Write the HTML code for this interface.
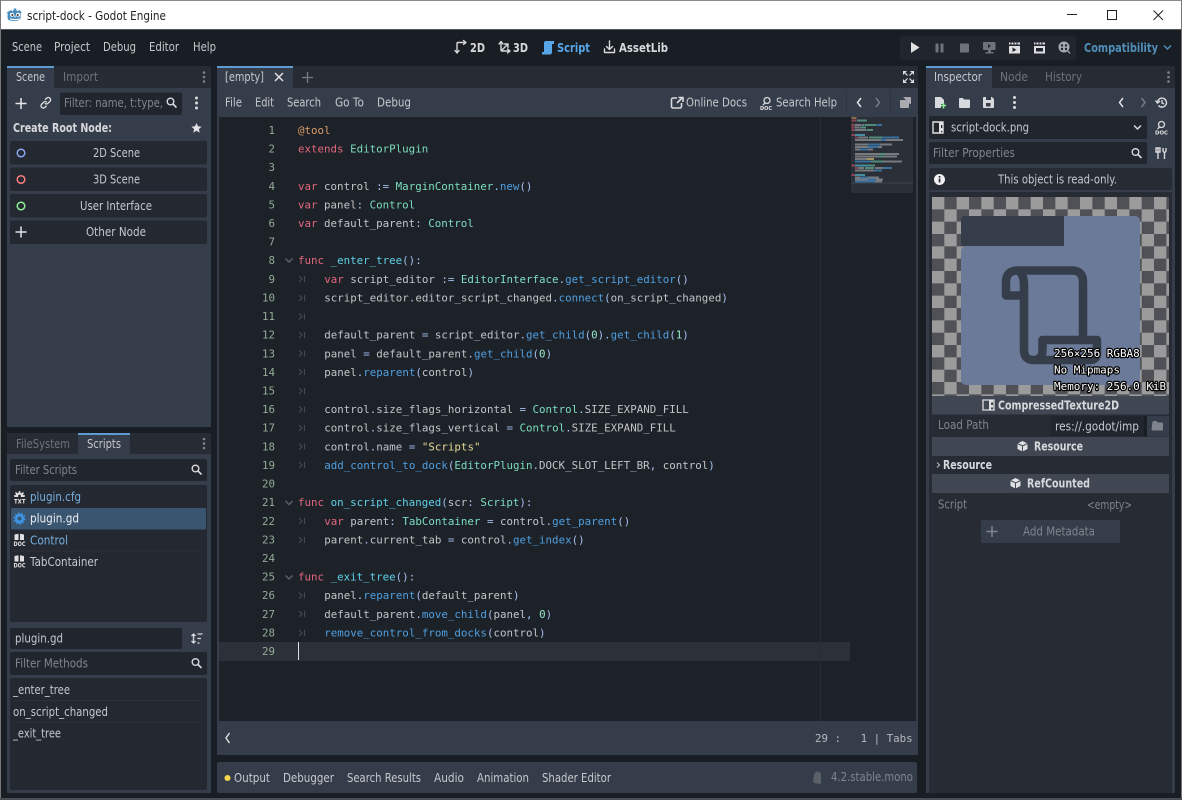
<!DOCTYPE html>
<html><head><meta charset="utf-8"><title>script-dock - Godot Engine</title>
<style>
html,body{margin:0;padding:0;background:#1a1e26;width:1182px;height:800px;overflow:hidden}
svg{display:block}
text{font-family:"DejaVu Sans",sans-serif;font-size:12px;fill:#c6c8cc;white-space:pre}
.b{font-weight:bold;fill:#d6d8db}
.d{fill:#80848c}
.dd{fill:#6e737b}
.c{font-family:"DejaVu Sans Mono","Liberation Mono",monospace;font-size:10.82px;fill:#c2c4c8}
.n{font-family:"DejaVu Sans Mono","Liberation Mono",monospace;font-size:10.82px;fill:#93ab95;text-anchor:end}
.k{fill:#e2667c}.t{fill:#7cdcc0}.f{fill:#4f9fe0}.s{fill:#a5bfee}.a{fill:#dc9c68}.h{fill:#5fd0e6}.q{fill:#e8d894}.u{fill:#95e8cc}
.ov{font-family:"DejaVu Sans Mono","Liberation Mono",monospace;font-size:10.96px;fill:#fff;stroke:#000;stroke-width:2.4px;paint-order:stroke;stroke-linejoin:round}
.i{fill:none;stroke:#d8d9dc;stroke-width:1.6;stroke-linecap:round;stroke-linejoin:round}
.mk{fill:none;stroke:#444a53;stroke-width:1.1}
.doc{font-size:5.5px;font-weight:bold;fill:#e0e0e2}
</style></head><body>
<svg width="1182" height="800" viewBox="0 0 1182 800" xmlns="http://www.w3.org/2000/svg">
<defs>
<pattern id="ck" x="932" y="197" width="24.67" height="24.67" patternUnits="userSpaceOnUse">
<rect width="24.67" height="24.67" fill="#4f5157"/>
<rect width="12.33" height="12.33" fill="#9b9b9b"/>
<rect x="12.33" y="12.33" width="12.34" height="12.34" fill="#9b9b9b"/>
</pattern>
</defs>
<!-- window -->
<rect width="1182" height="800" fill="#191d24"/>
<rect width="1182" height="30" fill="#fff"/>
<rect width="1182" height="1" fill="#8c8c8c"/>
<rect y="29" width="1182" height="1" fill="#555"/>
<rect x="0" y="0" width="1" height="800" fill="#777"/>
<rect x="1181" y="0" width="1" height="800" fill="#777"/>
<rect y="798" width="1182" height="2" fill="#4a4e55"/>
<!-- title logo -->
<path d="M9.500 11l1.500-1 1.200 1.200 1.300-.8.400-1.900h2.200l.4 1.900 1.300.8 1.200-1.200 1.500 1 1 1.500-.9.900V19c-1.500 1.500-4 2-6.500 2s-5-.5-6.500-2v-5.600l-.9-.9z" fill="#478cbf"/>
<circle cx="12" cy="14.800" r="2" fill="#fff"/><circle cx="18" cy="14.800" r="2" fill="#fff"/>
<circle cx="12.300" cy="15" r="1" fill="#333"/><circle cx="17.700" cy="15" r="1" fill="#333"/>
<rect x="14.400" y="15.500" width="1.200" height="1.800" fill="#fff"/>
<path d="M10 18.800c3 1 7 1 10 0" fill="none" stroke="#fff" stroke-width="1.200"/>
<text x="27" y="20" textLength="139" lengthAdjust="spacingAndGlyphs" style="fill:#222;font-size:12.500px">script-dock - Godot Engine</text>
<path d="M1067 14.500h10" stroke="#222" stroke-width="1"/>
<rect x="1107.500" y="10.500" width="9" height="9" fill="none" stroke="#222"/>
<path d="M1153.500 10.500l9.500 9.500M1163 10.500l-9.500 9.500" stroke="#222" stroke-width="1"/>
<!-- menu -->
<text x="12" y="51" textLength="30" lengthAdjust="spacingAndGlyphs">Scene</text>
<text x="54" y="51" textLength="36" lengthAdjust="spacingAndGlyphs">Project</text>
<text x="103" y="51" textLength="33" lengthAdjust="spacingAndGlyphs">Debug</text>
<text x="149" y="51" textLength="30" lengthAdjust="spacingAndGlyphs">Editor</text>
<text x="193" y="51" textLength="23" lengthAdjust="spacingAndGlyphs">Help</text>
<!-- main switcher -->
<path class="i" d="M457 53v-9.500a1 1 0 0 1 1-1h7M455 50.500l2 2.500 2-2.500M463.500 40.500l2.500 2-2.500 2" style="stroke-width:1.400"/>
<text x="470" y="52" textLength="15" lengthAdjust="spacingAndGlyphs" class="b">2D</text>
<path class="i" d="M501 42v8a1 1 0 0 0 1 1h7.500M499 44l2-2.500 2 2.500M507.500 49l2.500 2-2.500 2M501.500 50.500l6-6M504.500 44h3.500v3.500" style="stroke-width:1.400"/>
<text x="513" y="52" textLength="15" lengthAdjust="spacingAndGlyphs" class="b">3D</text>
<path d="M545 41h9v3h-2v8c0 1.500-1 2.500-2 2.500h-8v-2.500h2v-9c0-1 .5-1.500 1-1.500z" fill="#57a6e8"/>
<text x="557" y="52" textLength="33" lengthAdjust="spacingAndGlyphs" class="b" style="fill:#57a6e8">Script</text>
<path class="i" d="M609.500 41v8M606.500 46.500l3 3 3-3M604.500 49v3.500h10V49" style="stroke-width:1.400"/>
<text x="619" y="52" textLength="49" lengthAdjust="spacingAndGlyphs" class="b">AssetLib</text>
<!-- play bar -->
<rect x="900" y="36" width="176" height="24" rx="2" fill="#21262e"/>
<path d="M911 42v11l8.500-5.500z" fill="#e0e0e0"/>
<rect x="935.500" y="43.500" width="3" height="9" fill="#6f7379"/><rect x="940.500" y="43.500" width="3" height="9" fill="#6f7379"/>
<rect x="960" y="43.500" width="9" height="9" rx="1" fill="#6f7379"/>
<path d="M984 42h10.500a1 1 0 0 1 1 1v6a1 1 0 0 1-1 1h-3.500v2h2.500v1.500h-8V52h2.500v-2h-4a1 1 0 0 1-1-1v-6a1 1 0 0 1 1-1z" fill="#6f7379"/>
<path d="M988 44v4l3-2z" fill="#21262e"/>
<path d="M1009 46h11v7.500h-11z" fill="#e0e0e2"/><path d="M1009 42.500h11v2h-11z" fill="#e0e0e2"/><path d="M1011 42v3M1014 42v3M1017 42v3" stroke="#21262e" stroke-width="1"/><path d="M1012.500 47.500v4.500l4-2.200z" fill="#21262e"/>
<path d="M1034 46h11v7.500h-11z" fill="#e0e0e2"/><path d="M1034 42.500h11v2h-11z" fill="#e0e0e2"/><path d="M1036 42v3M1039 42v3M1042 42v3" stroke="#21262e" stroke-width="1"/><rect x="1036" y="48" width="7" height="3.500" fill="#21262e"/>
<circle cx="1064" cy="47" r="5.500" fill="#a7a9ad"/><circle cx="1062" cy="45.500" r="1.200" fill="#21262e"/><circle cx="1066" cy="45.500" r="1.200" fill="#21262e"/><circle cx="1062" cy="49" r="1.200" fill="#21262e"/><circle cx="1066" cy="49" r="1.200" fill="#21262e"/><path d="M1068 51l2 2.500" stroke="#a7a9ad" stroke-width="1.400"/>
<text x="1084" y="52" textLength="74" lengthAdjust="spacingAndGlyphs" class="b" style="fill:#4f8fb8">Compatibility</text>
<path d="M1164 45.500l3.500 3.500 3.500-3.500" fill="none" stroke="#4f8fb8" stroke-width="1.500"/>

<!-- scene dock -->
<rect x="7" y="66" width="204" height="22" fill="#262b34"/>
<rect x="7" y="88" width="204" height="339" fill="#363d4a"/>
<rect x="7" y="66" width="47" height="22" fill="#363d4a"/>
<rect x="7" y="66" width="47" height="2" fill="#5d9bd0"/>
<text x="16" y="81" textLength="29" lengthAdjust="spacingAndGlyphs">Scene</text>
<text x="63" y="81" textLength="35" lengthAdjust="spacingAndGlyphs" class="dd">Import</text>
<g fill="#80848c"><circle cx="204" cy="72.500" r="1.300"/><circle cx="204" cy="77" r="1.300"/><circle cx="204" cy="81.500" r="1.300"/></g>
<path d="M15.500 103.500h11M21 98v11" stroke="#e6e6e8" stroke-width="1.500"/>
<path d="M45 99.800l1.700-1.700a2.300 2.300 0 0 1 3.300 3.200l-2 2a2.300 2.300 0 0 1-3.200 0M46.800 102.200a2.300 2.300 0 0 0-3.200 0l-2 2a2.300 2.300 0 0 0 3.300 3.200l1.700-1.700" fill="none" stroke="#d8d9dc" stroke-width="1.400"/>
<rect x="60" y="92.500" width="122" height="22.500" rx="2" fill="#21262e"/>
<text x="64" y="107" textLength="99" lengthAdjust="spacingAndGlyphs" class="d">Filter: name, t:type,</text>
<circle cx="170.500" cy="101.500" r="3.300" fill="none" stroke="#d8d9dc" stroke-width="1.400"/><path d="M173 104l3.500 3.500" stroke="#d8d9dc" stroke-width="1.600"/>
<g fill="#d8d9dc"><circle cx="196.500" cy="98" r="1.500"/><circle cx="196.500" cy="103" r="1.500"/><circle cx="196.500" cy="108" r="1.500"/></g>
<text x="13" y="132" textLength="99" lengthAdjust="spacingAndGlyphs" class="b">Create Root Node:</text>
<path d="M196.500 123l1.500 3.300 3.600.4-2.700 2.400.8 3.600-3.200-1.900-3.200 1.900.8-3.600-2.700-2.400 3.600-.4z" fill="#e0e0e2"/>
<g fill="#232831">
<rect x="10" y="141" width="197" height="23.500" rx="2"/>
<rect x="10" y="167.500" width="197" height="23.500" rx="2"/>
<rect x="10" y="194" width="197" height="23.500" rx="2"/>
<rect x="10" y="220.500" width="197" height="23.500" rx="2"/>
</g>
<circle cx="21" cy="153" r="3.800" fill="none" stroke="#8da5f3" stroke-width="1.500"/>
<circle cx="21" cy="179.500" r="3.800" fill="none" stroke="#fc7f7f" stroke-width="1.500"/>
<circle cx="21" cy="206" r="3.800" fill="none" stroke="#8eef97" stroke-width="1.500"/>
<path d="M15.500 232h11M21 226.500v11" stroke="#e6e6e8" stroke-width="1.500"/>
<text x="93" y="157" textLength="47" lengthAdjust="spacingAndGlyphs">2D Scene</text>
<text x="93" y="183.500" textLength="47" lengthAdjust="spacingAndGlyphs">3D Scene</text>
<text x="80" y="210" textLength="72" lengthAdjust="spacingAndGlyphs">User Interface</text>
<text x="86" y="236" textLength="60" lengthAdjust="spacingAndGlyphs">Other Node</text>

<!-- scripts dock -->
<rect x="7" y="433" width="204" height="21" fill="#262b34"/>
<rect x="7" y="454" width="204" height="339" fill="#363d4a"/>
<rect x="78" y="433" width="52" height="21" fill="#363d4a"/>
<rect x="78" y="433" width="52" height="2" fill="#5d9bd0"/>
<text x="16" y="448" textLength="54" lengthAdjust="spacingAndGlyphs" class="dd">FileSystem</text>
<text x="87" y="448" textLength="34" lengthAdjust="spacingAndGlyphs">Scripts</text>
<g fill="#80848c"><circle cx="204" cy="439" r="1.300"/><circle cx="204" cy="443.500" r="1.300"/><circle cx="204" cy="448" r="1.300"/></g>
<rect x="10" y="459" width="197" height="22" rx="2" fill="#21262e"/>
<text x="15" y="474" textLength="62" lengthAdjust="spacingAndGlyphs" class="d">Filter Scripts</text>
<circle cx="195.500" cy="468.500" r="3.300" fill="none" stroke="#d8d9dc" stroke-width="1.400"/><path d="M198 471l3.500 3.500" stroke="#d8d9dc" stroke-width="1.600"/>
<rect x="10" y="485" width="197" height="137" rx="2" fill="#232831"/>
<!-- plugin.cfg icon: gear top + TXT -->
<path d="M15 497a4.500 4.500 0 0 1 9 0z" fill="#e0e0e2"/>
<path d="M19.500 491v2M15.500 492.500l1.300 1.300M23.500 492.500l-1.300 1.300M14 496h1.500M23.500 496H25" stroke="#e0e0e2" stroke-width="1.500"/>
<circle cx="19.500" cy="496" r="1.400" fill="#232831"/>
<text x="14" y="503.500" textLength="11.500" lengthAdjust="spacingAndGlyphs" class="doc" style="font-size:6px">TXT</text>
<text x="30" y="501" textLength="51" lengthAdjust="spacingAndGlyphs" style="fill:#77aedd">plugin.cfg</text>
<rect x="11" y="508" width="195" height="21.500" rx="1" fill="#3a5570"/>
<circle cx="19.500" cy="518.500" r="3.300" fill="none" stroke="#3f96e8" stroke-width="2.600"/>
<circle cx="19.500" cy="518.500" r="5.300" fill="none" stroke="#3f96e8" stroke-width="1.400" stroke-dasharray="1.800 1.500"/>
<text x="30" y="522.500" textLength="49" lengthAdjust="spacingAndGlyphs" style="fill:#eceef0">plugin.gd</text>
<path d="M14.500 534.500l4-.8v6.300h-4zM20 533.700l4 .8v5.500h-4z" fill="#e0e0e2"/>
<text x="13.500" y="546" textLength="12" lengthAdjust="spacingAndGlyphs" class="doc" style="font-size:6px">DOC</text>
<text x="30" y="544.500" textLength="38" lengthAdjust="spacingAndGlyphs" style="fill:#77aedd">Control</text>
<rect x="13" y="550.500" width="188" height="1" fill="#2b3039"/>
<path d="M14.500 556l4-.8v6.300h-4zM20 555.200l4 .8v5.500h-4z" fill="#e0e0e2"/>
<text x="13.500" y="567.500" textLength="12" lengthAdjust="spacingAndGlyphs" class="doc" style="font-size:6px">DOC</text>
<text x="30" y="566" textLength="68" lengthAdjust="spacingAndGlyphs">TabContainer</text>
<rect x="10" y="628" width="172" height="21" rx="2" fill="#21262e"/>
<text x="15" y="642.500" textLength="48" lengthAdjust="spacingAndGlyphs">plugin.gd</text>
<path d="M193.500 634v9M191.500 636l2-2 2 2M191.500 641l2 2 2-2M197.500 634h5M197.500 638.500h3.500M197.500 643h2" fill="none" stroke="#d8d9dc" stroke-width="1.300"/>
<rect x="10" y="652" width="197" height="23" rx="2" fill="#21262e"/>
<text x="15" y="667.500" textLength="73" lengthAdjust="spacingAndGlyphs" class="d">Filter Methods</text>
<circle cx="195.500" cy="662" r="3.300" fill="none" stroke="#d8d9dc" stroke-width="1.400"/><path d="M198 664.500l3.500 3.500" stroke="#d8d9dc" stroke-width="1.600"/>
<rect x="10" y="678" width="197" height="112" rx="2" fill="#232831"/>
<text x="13" y="694" textLength="57" lengthAdjust="spacingAndGlyphs">_enter_tree</text>
<rect x="13" y="700" width="188" height="1" fill="#2b3039"/>
<text x="13" y="716" textLength="95" lengthAdjust="spacingAndGlyphs">on_script_changed</text>
<rect x="13" y="722" width="188" height="1" fill="#2b3039"/>
<text x="13" y="737.500" textLength="48" lengthAdjust="spacingAndGlyphs">_exit_tree</text>

<!-- editor -->
<rect x="217" y="66" width="701" height="22" fill="#262b34"/>
<rect x="217" y="88" width="701" height="667" fill="#363d4a"/>
<rect x="217" y="66" width="76" height="22" fill="#363d4a"/>
<rect x="217" y="66" width="76" height="2" fill="#5d9bd0"/>
<text x="225" y="81" textLength="39" lengthAdjust="spacingAndGlyphs">[empty]</text>
<path d="M275 73l8 8M283 73l-8 8" stroke="#e0e0e2" stroke-width="1.500"/>
<path d="M302 77.500h11M307.500 72v11" stroke="#777c85" stroke-width="1.300"/>
<path d="M903 71h4l-4 4zM914 71v4l-4-4zM903 83v-4l4 4zM914 83h-4l4-4z" fill="#e0e0e2"/>
<path d="M905 73l2.500 2.500M912 73l-2.500 2.500M905 81l2.500-2.500M912 81l-2.500-2.500" stroke="#e0e0e2" stroke-width="1.200"/>
<text x="225" y="106.500" textLength="17" lengthAdjust="spacingAndGlyphs">File</text>
<text x="255" y="106.500" textLength="19" lengthAdjust="spacingAndGlyphs">Edit</text>
<text x="287" y="106.500" textLength="34" lengthAdjust="spacingAndGlyphs">Search</text>
<text x="335" y="106.500" textLength="29" lengthAdjust="spacingAndGlyphs">Go To</text>
<text x="377" y="106.500" textLength="34" lengthAdjust="spacingAndGlyphs">Debug</text>
<path d="M677 98h-4a1.500 1.500 0 0 0-1.500 1.500v7a1.500 1.500 0 0 0 1.500 1.500h7a1.500 1.500 0 0 0 1.500-1.500V103M677 103l5-5M678.500 97.500h4.500v4.500" fill="none" stroke="#d8d9dc" stroke-width="1.600"/>
<text x="686" y="106.500" textLength="61" lengthAdjust="spacingAndGlyphs">Online Docs</text>
<circle cx="767" cy="100.500" r="3" fill="none" stroke="#d8d9dc" stroke-width="1.300"/><path d="M765 103l-2 2" stroke="#d8d9dc" stroke-width="1.300"/>
<text x="760" y="110" textLength="12" lengthAdjust="spacingAndGlyphs" class="doc">DOC</text>
<text x="776" y="106.500" textLength="61" lengthAdjust="spacingAndGlyphs">Search Help</text>
<rect x="846" y="91" width="1" height="23" fill="#2e343f"/>
<rect x="890" y="91" width="1" height="23" fill="#2e343f"/>
<path d="M861 98l-3.500 4.500 3.500 4.500" fill="none" stroke="#e0e0e2" stroke-width="1.500"/>
<path d="M876 98l3.500 4.500-3.500 4.500" fill="none" stroke="#787c84" stroke-width="1.500"/>
<path d="M903 97h7a1 1 0 0 1 1 1v6h-1M900 100h8a1 1 0 0 1 1 1v6a1 1 0 0 1-1 1h-7a1 1 0 0 1-1-1z" fill="#a9abb0"/>
<!-- code bg -->
<rect x="219" y="117" width="697" height="604" fill="#1d2229"/>
<rect x="219" y="642" width="631" height="19" fill="#2c3038"/>
<rect x="820" y="117" width="1" height="604" fill="#272c33"/>
<rect x="298" y="642" width="1" height="18" fill="#e0e0e0"/>
<!-- minimap -->
<rect x="851" y="117" width="62" height="76" fill="#2b2f37"/>
<rect x="851" y="182" width="62" height="2" fill="#353a42"/>
<g opacity=".8">
<rect x="851.500" y="117" width="5" height="2" fill="#a87a4c"/>
<rect x="851.500" y="119.500" width="5" height="2" fill="#a8485c"/><rect x="857" y="119.500" width="10" height="2" fill="#5ea48d"/>
<rect x="851.500" y="124" width="2.500" height="2" fill="#a8485c"/><rect x="854.500" y="124" width="7" height="2" fill="#8a8d92"/><rect x="862" y="124" width="2" height="2" fill="#7f8fa8"/><rect x="864.500" y="124" width="12" height="2" fill="#5ea48d"/><rect x="877" y="124" width="5" height="2" fill="#3f7fb8"/>
<rect x="851.500" y="126.500" width="2.500" height="2" fill="#a8485c"/><rect x="854.500" y="126.500" width="5" height="2" fill="#8a8d92"/><rect x="860" y="126.500" width="6" height="2" fill="#5ea48d"/>
<rect x="851.500" y="129" width="2.500" height="2" fill="#a8485c"/><rect x="854.500" y="129" width="12" height="2" fill="#8a8d92"/><rect x="867" y="129" width="6" height="2" fill="#5ea48d"/>
<rect x="851.500" y="134" width="3.500" height="2" fill="#a8485c"/><rect x="855" y="134" width="10" height="2" fill="#4aa7bb"/>
<rect x="855" y="136.500" width="2.500" height="2" fill="#a8485c"/><rect x="858" y="136.500" width="10" height="2" fill="#8a8d92"/><rect x="869" y="136.500" width="13" height="2" fill="#5ea48d"/><rect x="882" y="136.500" width="17" height="2" fill="#3f7fb8"/>
<rect x="855" y="139" width="26" height="2" fill="#8a8d92"/><rect x="881" y="139" width="5" height="2" fill="#3f7fb8"/><rect x="886" y="139" width="17" height="2" fill="#8a8d92"/>
<rect x="855" y="143.500" width="13" height="2" fill="#8a8d92"/><rect x="868" y="143.500" width="12" height="2" fill="#3f7fb8"/><rect x="880" y="143.500" width="12" height="2" fill="#8a8d92"/>
<rect x="855" y="146" width="13" height="2" fill="#8a8d92"/><rect x="868" y="146" width="10" height="2" fill="#3f7fb8"/><rect x="878" y="146" width="4" height="2" fill="#8a8d92"/>
<rect x="855" y="148.500" width="5" height="2" fill="#8a8d92"/><rect x="860" y="148.500" width="8" height="2" fill="#3f7fb8"/><rect x="868" y="148.500" width="5" height="2" fill="#8a8d92"/>
<rect x="855" y="153" width="25" height="2" fill="#8a8d92"/><rect x="880" y="153" width="5" height="2" fill="#5ea48d"/><rect x="885" y="153" width="14" height="2" fill="#8a8d92"/>
<rect x="855" y="155.500" width="23" height="2" fill="#8a8d92"/><rect x="878" y="155.500" width="5" height="2" fill="#5ea48d"/><rect x="883" y="155.500" width="14" height="2" fill="#8a8d92"/>
<rect x="855" y="158" width="12" height="2" fill="#8a8d92"/><rect x="867" y="158" width="7" height="2" fill="#bfae6a"/>
<rect x="855" y="160.500" width="16" height="2" fill="#3f7fb8"/><rect x="871" y="160.500" width="12" height="2" fill="#5ea48d"/><rect x="883" y="160.500" width="14" height="2" fill="#8a8d92"/><rect x="897" y="160.500" width="5" height="2" fill="#8a8d92"/>
<rect x="851.500" y="164.500" width="3.500" height="2" fill="#a8485c"/><rect x="855" y="164.500" width="14" height="2" fill="#4aa7bb"/><rect x="869" y="164.500" width="6" height="2" fill="#5ea48d"/>
<rect x="855" y="167" width="2.500" height="2" fill="#a8485c"/><rect x="858" y="167" width="6" height="2" fill="#8a8d92"/><rect x="865" y="167" width="9" height="2" fill="#5ea48d"/><rect x="875" y="167" width="8" height="2" fill="#8a8d92"/><rect x="883" y="167" width="9" height="2" fill="#3f7fb8"/>
<rect x="855" y="169.500" width="19" height="2" fill="#8a8d92"/><rect x="874" y="169.500" width="8" height="2" fill="#3f7fb8"/>
<rect x="851.500" y="174" width="3.500" height="2" fill="#a8485c"/><rect x="855" y="174" width="10" height="2" fill="#4aa7bb"/>
<rect x="855" y="176.500" width="5" height="2" fill="#8a8d92"/><rect x="860" y="176.500" width="8" height="2" fill="#3f7fb8"/><rect x="868" y="176.500" width="11" height="2" fill="#8a8d92"/>
<rect x="855" y="178.500" width="13" height="2" fill="#8a8d92"/><rect x="868" y="178.500" width="8" height="2" fill="#3f7fb8"/><rect x="876" y="178.500" width="7" height="2" fill="#8a8d92"/>
<rect x="855" y="180.500" width="20" height="2" fill="#3f7fb8"/><rect x="875" y="180.500" width="7" height="2" fill="#8a8d92"/>
</g>
<!-- line numbers -->
<g>
<text class="n" x="275" y="134">1</text>
<text class="n" x="275" y="152.600">2</text>
<text class="n" x="275" y="171.200">3</text>
<text class="n" x="275" y="189.800">4</text>
<text class="n" x="275" y="208.400">5</text>
<text class="n" x="275" y="227">6</text>
<text class="n" x="275" y="245.600">7</text>
<text class="n" x="275" y="264.200">8</text>
<text class="n" x="275" y="282.900">9</text>
<text class="n" x="275" y="301.500">10</text>
<text class="n" x="275" y="320.100">11</text>
<text class="n" x="275" y="338.700">12</text>
<text class="n" x="275" y="357.300">13</text>
<text class="n" x="275" y="375.900">14</text>
<text class="n" x="275" y="394.500">15</text>
<text class="n" x="275" y="413.100">16</text>
<text class="n" x="275" y="431.700">17</text>
<text class="n" x="275" y="450.300">18</text>
<text class="n" x="275" y="468.900">19</text>
<text class="n" x="275" y="487.500">20</text>
<text class="n" x="275" y="506.200">21</text>
<text class="n" x="275" y="524.800">22</text>
<text class="n" x="275" y="543.400">23</text>
<text class="n" x="275" y="562">24</text>
<text class="n" x="275" y="580.600">25</text>
<text class="n" x="275" y="599.200">26</text>
<text class="n" x="275" y="617.800">27</text>
<text class="n" x="275" y="636.400">28</text>
<text class="n" x="275" y="655">29</text>
</g>
<!-- fold arrows -->
<path d="M285.500 258.500l3.500 3.500 3.500-3.500M285.500 501l3.500 3.500 3.500-3.500M285.500 575.500l3.500 3.500 3.500-3.500" fill="none" stroke="#555a62" stroke-width="1.600"/>
<!-- tab markers -->
<path class="mk" d="M299 276l3 3-3 3M304.500 276v6M299 295l3 3-3 3M304.500 295v6M299 313.500l3 3-3 3M304.500 313.500v6M299 332l3 3-3 3M304.500 332v6M299 350.500l3 3-3 3M304.500 350.500v6M299 369l3 3-3 3M304.500 369v6M299 388l3 3-3 3M304.500 388v6M299 406.500l3 3-3 3M304.500 406.500v6M299 425l3 3-3 3M304.500 425v6M299 443.500l3 3-3 3M304.500 443.500v6M299 462l3 3-3 3M304.500 462v6M299 518l3 3-3 3M304.500 518v6M299 537l3 3-3 3M304.500 537v6M299 592.500l3 3-3 3M304.500 592.500v6M299 611l3 3-3 3M304.500 611v6M299 630l3 3-3 3M304.500 630v6"/>
<!-- code -->
<g>
<text class="c" x="298" y="134"><tspan class="a">@tool</tspan></text>
<text class="c" x="298" y="152.600"><tspan class="k">extends</tspan> <tspan class="t">EditorPlugin</tspan></text>
<text class="c" x="298" y="189.800"><tspan class="k">var</tspan> control <tspan class="s">:=</tspan> <tspan class="t">MarginContainer</tspan><tspan class="s">.</tspan><tspan class="f">new</tspan><tspan class="s">()</tspan></text>
<text class="c" x="298" y="208.400"><tspan class="k">var</tspan> panel<tspan class="s">:</tspan> <tspan class="t">Control</tspan></text>
<text class="c" x="298" y="227"><tspan class="k">var</tspan> default_parent<tspan class="s">:</tspan> <tspan class="t">Control</tspan></text>
<text class="c" x="298" y="264.200"><tspan class="k">func</tspan> <tspan class="h">_enter_tree</tspan><tspan class="s">():</tspan></text>
<text class="c" x="324.200" y="282.900"><tspan class="k">var</tspan> script_editor <tspan class="s">:=</tspan> <tspan class="t">EditorInterface</tspan><tspan class="s">.</tspan><tspan class="f">get_script_editor</tspan><tspan class="s">()</tspan></text>
<text class="c" x="324.200" y="301.500">script_editor<tspan class="s">.</tspan>editor_script_changed<tspan class="s">.</tspan><tspan class="f">connect</tspan><tspan class="s">(</tspan>on_script_changed<tspan class="s">)</tspan></text>
<text class="c" x="324.200" y="338.700">default_parent <tspan class="s">=</tspan> script_editor<tspan class="s">.</tspan><tspan class="f">get_child</tspan><tspan class="s">(</tspan><tspan class="u">0</tspan><tspan class="s">).</tspan><tspan class="f">get_child</tspan><tspan class="s">(</tspan><tspan class="u">1</tspan><tspan class="s">)</tspan></text>
<text class="c" x="324.200" y="357.300">panel <tspan class="s">=</tspan> default_parent<tspan class="s">.</tspan><tspan class="f">get_child</tspan><tspan class="s">(</tspan><tspan class="u">0</tspan><tspan class="s">)</tspan></text>
<text class="c" x="324.200" y="375.900">panel<tspan class="s">.</tspan><tspan class="f">reparent</tspan><tspan class="s">(</tspan>control<tspan class="s">)</tspan></text>
<text class="c" x="324.200" y="413.100">control<tspan class="s">.</tspan>size_flags_horizontal <tspan class="s">=</tspan> <tspan class="t">Control</tspan><tspan class="s">.</tspan>SIZE_EXPAND_FILL</text>
<text class="c" x="324.200" y="431.700">control<tspan class="s">.</tspan>size_flags_vertical <tspan class="s">=</tspan> <tspan class="t">Control</tspan><tspan class="s">.</tspan>SIZE_EXPAND_FILL</text>
<text class="c" x="324.200" y="450.300">control<tspan class="s">.</tspan>name <tspan class="s">=</tspan> <tspan class="q">"Scripts"</tspan></text>
<text class="c" x="324.200" y="468.900"><tspan class="f">add_control_to_dock</tspan><tspan class="s">(</tspan><tspan class="t">EditorPlugin</tspan><tspan class="s">.</tspan>DOCK_SLOT_LEFT_BR<tspan class="s">,</tspan> control<tspan class="s">)</tspan></text>
<text class="c" x="298" y="506.200"><tspan class="k">func</tspan> <tspan class="h">on_script_changed</tspan><tspan class="s">(</tspan>scr<tspan class="s">:</tspan> <tspan class="t">Script</tspan><tspan class="s">):</tspan></text>
<text class="c" x="324.200" y="524.800"><tspan class="k">var</tspan> parent<tspan class="s">:</tspan> <tspan class="t">TabContainer</tspan> <tspan class="s">=</tspan> control<tspan class="s">.</tspan><tspan class="f">get_parent</tspan><tspan class="s">()</tspan></text>
<text class="c" x="324.200" y="543.400">parent<tspan class="s">.</tspan>current_tab <tspan class="s">=</tspan> control<tspan class="s">.</tspan><tspan class="f">get_index</tspan><tspan class="s">()</tspan></text>
<text class="c" x="298" y="580.600"><tspan class="k">func</tspan> <tspan class="h">_exit_tree</tspan><tspan class="s">():</tspan></text>
<text class="c" x="324.200" y="599.200">panel<tspan class="s">.</tspan><tspan class="f">reparent</tspan><tspan class="s">(</tspan>default_parent<tspan class="s">)</tspan></text>
<text class="c" x="324.200" y="617.800">default_parent<tspan class="s">.</tspan><tspan class="f">move_child</tspan><tspan class="s">(</tspan>panel<tspan class="s">,</tspan> <tspan class="u">0</tspan><tspan class="s">)</tspan></text>
<text class="c" x="324.200" y="636.400"><tspan class="f">remove_control_from_docks</tspan><tspan class="s">(</tspan>control<tspan class="s">)</tspan></text>
</g>
<!-- status -->
<path d="M229.500 733l-3.500 5 3.500 5" fill="none" stroke="#d8d9dc" stroke-width="1.500"/>
<text class="c" x="815" y="742" style="fill:#b6b8bc">29 :   1 | Tabs</text>
<!-- bottom panel -->
<rect x="217" y="762" width="700" height="31" rx="2" fill="#363d4a"/>
<circle cx="227.500" cy="778" r="3" fill="#f5d64e"/>
<text x="234" y="782" textLength="36" lengthAdjust="spacingAndGlyphs">Output</text>
<text x="283" y="782" textLength="51" lengthAdjust="spacingAndGlyphs">Debugger</text>
<text x="347" y="782" textLength="74" lengthAdjust="spacingAndGlyphs">Search Results</text>
<text x="434" y="782" textLength="30" lengthAdjust="spacingAndGlyphs">Audio</text>
<text x="477" y="782" textLength="52" lengthAdjust="spacingAndGlyphs">Animation</text>
<text x="542" y="782" textLength="69" lengthAdjust="spacingAndGlyphs">Shader Editor</text>
<path d="M813 782l1-7c.5-2.500 2-3.500 4-3.500s3 2 3 3.500v8.500c-2 .5-5 .5-8-1.500z" fill="#5b6068"/>
<text x="831" y="781" textLength="82" lengthAdjust="spacingAndGlyphs" class="d">4.2.stable.mono</text>

<!-- inspector -->
<rect x="926" y="66" width="249" height="22" fill="#262b34"/>
<rect x="926" y="88" width="249" height="705" fill="#363d4a"/>
<rect x="926" y="66" width="66" height="22" fill="#363d4a"/>
<rect x="926" y="66" width="66" height="2" fill="#5d9bd0"/>
<text x="934" y="81" textLength="48" lengthAdjust="spacingAndGlyphs">Inspector</text>
<text x="1000" y="81" textLength="28" lengthAdjust="spacingAndGlyphs" class="dd">Node</text>
<text x="1045" y="81" textLength="37" lengthAdjust="spacingAndGlyphs" class="dd">History</text>
<g fill="#80848c"><circle cx="1168.500" cy="72.500" r="1.300"/><circle cx="1168.500" cy="77" r="1.300"/><circle cx="1168.500" cy="81.500" r="1.300"/></g>
<!-- inspector toolbar -->
<path d="M935 97h6l3 3v4h-3v4h-6z" fill="#d8d9dc"/><path d="M941 105.500h5M943.500 103v5.500" stroke="#8eef97" stroke-width="1.500"/>
<path d="M959 99a1 1 0 0 1 1-1h3l1 1.500h5a1 1 0 0 1 1 1v6.500a1 1 0 0 1-1 1h-9a1 1 0 0 1-1-1z" fill="#d8d9dc"/>
<path d="M984 97h8l2 2v8a1 1 0 0 1-1 1h-9a1 1 0 0 1-1-1v-9a1 1 0 0 1 1-1z" fill="#d8d9dc"/><rect x="986" y="97" width="5" height="3" fill="#363d4a"/><rect x="986" y="103" width="4.500" height="3.500" fill="#363d4a"/>
<g fill="#d8d9dc"><circle cx="1014.500" cy="97.500" r="1.500"/><circle cx="1014.500" cy="102.500" r="1.500"/><circle cx="1014.500" cy="107.500" r="1.500"/></g>
<path d="M1123 98l-3.500 4.500 3.500 4.500" fill="none" stroke="#e0e0e2" stroke-width="1.500"/>
<path d="M1141.500 98l3.500 4.500-3.500 4.500" fill="none" stroke="#787c84" stroke-width="1.500"/>
<path d="M1157.500 102a4.500 4.500 0 1 1 1 3.500M1155.500 100.500l2 2.500 2.500-2M1162 100v3l2 1" fill="none" stroke="#d8d9dc" stroke-width="1.400"/>
<rect x="929" y="116" width="218" height="23" rx="2" fill="#21262e"/>
<path d="M933 122h10v11h-10z" fill="none" stroke="#e0e0e2" stroke-width="1.400"/><path d="M939 122h4v3h-2v3h2v3h-2v2h-2z" fill="#e0e0e2"/>
<text x="951" y="131.500" textLength="78" lengthAdjust="spacingAndGlyphs">script-dock.png</text>
<path d="M1134 125.500l3.500 3.500 3.500-3.500" fill="none" stroke="#d8d9dc" stroke-width="1.500"/>
<circle cx="1161.500" cy="124.500" r="3" fill="none" stroke="#d8d9dc" stroke-width="1.300"/><path d="M1159.500 127l-2 2" stroke="#d8d9dc" stroke-width="1.300"/>
<text x="1155" y="134.500" textLength="13" lengthAdjust="spacingAndGlyphs" class="doc">DOC</text>
<rect x="929" y="142" width="218" height="22" rx="2" fill="#21262e"/>
<text x="933" y="157" textLength="82" lengthAdjust="spacingAndGlyphs" class="d">Filter Properties</text>
<circle cx="1135.500" cy="152" r="3.300" fill="none" stroke="#d8d9dc" stroke-width="1.400"/><path d="M1138 154.500l3.500 3.500" stroke="#d8d9dc" stroke-width="1.600"/>
<path d="M1158 148v11M1156 148h4v4h-4zM1163 148v3l1.500 2 1.500-2v-3M1164.500 153v6" fill="none" stroke="#d8d9dc" stroke-width="1.400"/>
<rect x="929" y="168" width="243" height="22" rx="2" fill="#262b34"/>
<circle cx="939.500" cy="179.500" r="5.500" fill="#f0f0f0"/><rect x="938.700" y="178.500" width="1.700" height="4" fill="#262b34"/><rect x="938.700" y="176" width="1.700" height="1.700" fill="#262b34"/>
<text x="998" y="183.500" textLength="119" lengthAdjust="spacingAndGlyphs">This object is read-only.</text>
<!-- preview panel -->
<rect x="929" y="192" width="243" height="601" fill="#262b34"/>
<rect x="932" y="197" width="237" height="199" fill="url(#ck)"/>
<path d="M961 246v-26a4 4 0 0 1 4-4h99v30z" fill="#363d4a"/>
<path d="M1064 246v-30h71a5 5 0 0 1 5 5v159a5 5 0 0 1-5 5h-169a5 5 0 0 1-5-5v-129a5 5 0 0 1 5-5z" fill="#6a7a98"/>
<g fill="none" stroke="#363d4a" stroke-width="8.500" stroke-linejoin="round">
<path d="M1024 295.500H1006V282Q1006 270.500 1018 270.500H1072Q1083 270.500 1083 282V340"/>
<path d="M1018 270.500Q1024 274 1024 285V350Q1024 360 1033.500 360H1090Q1097 360 1097 353V340H1042.500V350Q1042.500 360 1033.500 360"/>
</g>
<text class="ov" x="1054" y="357">256×256 RGBA8</text>
<text class="ov" x="1054" y="373.500">No Mipmaps</text>
<text class="ov" x="1054" y="390">Memory: 256.0 KiB</text>
<!-- property bars -->
<rect x="932" y="396" width="237" height="18.500" fill="#404753"/>
<path d="M983 400h11v10h-11z" fill="none" stroke="#e0e0e2" stroke-width="1.300"/><path d="M989 400h4v2.500h-2v2.500h2v2.500h-2v2h-2z" fill="#e0e0e2"/>
<text x="998" y="409.500" textLength="121" lengthAdjust="spacingAndGlyphs" class="b">CompressedTexture2D</text>
<text x="938" y="429" textLength="51" lengthAdjust="spacingAndGlyphs" class="d">Load Path</text>
<rect x="1051" y="416" width="93" height="20.500" fill="#21262e"/>
<rect x="1144" y="416" width="3" height="20.500" fill="#1a1e25"/>
<rect x="1147" y="416" width="22" height="20.500" fill="#363d4a"/>
<text x="1055" y="430.500" textLength="84" lengthAdjust="spacingAndGlyphs">res://.godot/imp</text>
<path d="M1152.500 422a1 1 0 0 1 1-1h3l1 1.500h4.500a1 1 0 0 1 1 1v6a1 1 0 0 1-1 1h-9.500a1 1 0 0 1-1-1z" fill="#80848c"/>
<rect x="932" y="437" width="237" height="19" fill="#404753"/>
<path d="M1022.500 441l5 2.500v5.500l-5 2.500-5-2.500v-5.500z" fill="#e0e0e2"/><path d="M1017.500 443.500l5 2.500 5-2.500M1022.500 446v5.500" fill="none" stroke="#404753" stroke-width="1"/>
<text x="1034" y="450.500" textLength="49" lengthAdjust="spacingAndGlyphs" class="b">Resource</text>
<path d="M937 462.500l2.500 2.500-2.500 2.500" fill="none" stroke="#b0b2b6" stroke-width="1.200"/>
<text x="943" y="469" textLength="49" lengthAdjust="spacingAndGlyphs" class="b">Resource</text>
<rect x="932" y="474" width="237" height="19" fill="#404753"/>
<path d="M1015.500 478l5 2.500v5.500l-5 2.500-5-2.500v-5.500z" fill="#e0e0e2"/><path d="M1010.500 480.500l5 2.500 5-2.500M1015.500 483v5.500" fill="none" stroke="#404753" stroke-width="1"/>
<text x="1027" y="487.500" textLength="63" lengthAdjust="spacingAndGlyphs" class="b">RefCounted</text>
<text x="938" y="508.500" textLength="29" lengthAdjust="spacingAndGlyphs" class="d">Script</text>
<text x="1087" y="509" textLength="45" lengthAdjust="spacingAndGlyphs" class="d">&lt;empty&gt;</text>
<rect x="981" y="520" width="139" height="23" rx="2" fill="#363d4a"/>
<path d="M986.500 531.500h11M992 526v11" stroke="#80848c" stroke-width="1.500"/>
<text x="1023" y="535.500" textLength="72" lengthAdjust="spacingAndGlyphs" class="d">Add Metadata</text>
</svg>
</body></html>
